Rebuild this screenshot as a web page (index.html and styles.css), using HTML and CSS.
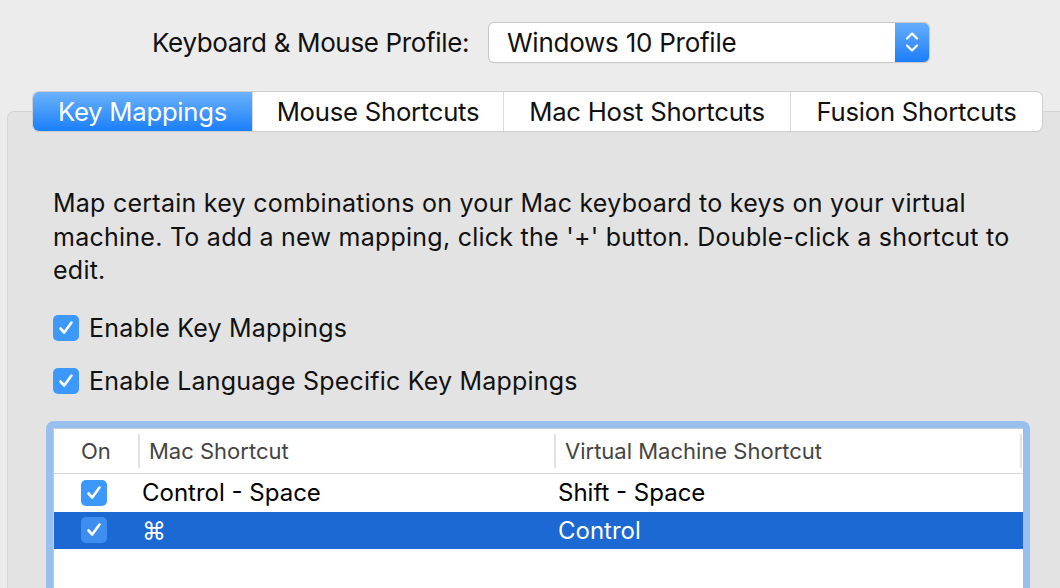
FILE: index.html
```html
<!DOCTYPE html>
<html>
<head>
<meta charset="utf-8">
<link rel="stylesheet" href="styles.css">
</head>
<body>
<div class="window">
  <div class="profile-row">
    <span class="profile-label">Keyboard &amp; Mouse Profile:</span>
    <div class="popup">
      <span class="popup-value">Windows 10 Profile</span>
      <span class="stepper">
        <svg width="16" height="26" viewBox="0 0 16 26"><path d="M3 9.5 L8 4.5 L13 9.5" fill="none" stroke="#fff" stroke-width="2.2" stroke-linecap="round" stroke-linejoin="round"/><path d="M3 16.5 L8 21.5 L13 16.5" fill="none" stroke="#fff" stroke-width="2.2" stroke-linecap="round" stroke-linejoin="round"/></svg>
      </span>
    </div>
  </div>

  <div class="panel">
    <div class="tabs">
      <div class="tab tab-selected tab-key">Key Mappings</div>
      <div class="tab tab-mouse">Mouse Shortcuts</div>
      <div class="tab tab-host">Mac Host Shortcuts</div>
      <div class="tab tab-fusion">Fusion Shortcuts</div>
    </div>

    <p class="desc">Map certain key combinations on your Mac keyboard to keys on your virtual machine. To add a new mapping, click the '+' button. Double-click a shortcut to edit.</p>

    <label class="check-row">
      <span class="checkbox"><svg width="26" height="26" viewBox="0 0 26 26"><path d="M7.5 13.5 L11.2 17.5 L18.5 7.5" fill="none" stroke="#fff" stroke-width="2.6" stroke-linecap="round" stroke-linejoin="round"/></svg></span>
      <span class="check-label">Enable Key Mappings</span>
    </label>
    <label class="check-row">
      <span class="checkbox"><svg width="26" height="26" viewBox="0 0 26 26"><path d="M7.5 13.5 L11.2 17.5 L18.5 7.5" fill="none" stroke="#fff" stroke-width="2.6" stroke-linecap="round" stroke-linejoin="round"/></svg></span>
      <span class="check-label">Enable Language Specific Key Mappings</span>
    </label>

    <div class="table-ring">
      <div class="table">
        <div class="thead">
          <div class="th th-on">On</div>
          <div class="th th-mac">Mac Shortcut</div>
          <div class="th th-vm">Virtual Machine Shortcut</div>
          <div class="th th-end"></div>
        </div>
        <div class="row">
          <div class="cell cell-on"><span class="checkbox small"><svg width="26" height="26" viewBox="0 0 26 26"><path d="M7.5 13.5 L11.2 17.5 L18.5 7.5" fill="none" stroke="#fff" stroke-width="2.6" stroke-linecap="round" stroke-linejoin="round"/></svg></span></div>
          <div class="cell cell-mac">Control - Space</div>
          <div class="cell cell-vm">Shift - Space</div>
        </div>
        <div class="row row-selected">
          <div class="cell cell-on"><span class="checkbox small sel"><svg width="26" height="26" viewBox="0 0 26 26"><path d="M7.5 13.5 L11.2 17.5 L18.5 7.5" fill="none" stroke="#fff" stroke-width="2.6" stroke-linecap="round" stroke-linejoin="round"/></svg></span></div>
          <div class="cell cell-mac">⌘</div>
          <div class="cell cell-vm">Control</div>
        </div>
        <div class="filler"></div>
      </div>
    </div>
  </div>
</div>
</body>
</html>
```

FILE: styles.css
```css
html, body {
  margin: 0;
  padding: 0;
}
body {
  background: #ececec;
  font-family: Inter, "Noto Sans", sans-serif;
  color: #000;
  width: 1060px;
  height: 588px;
  overflow: hidden;
}
.window {
  padding-top: 22px;
}
.profile-row {
  display: flex;
  align-items: center;
  padding-left: 152px;
  height: 40px;
}
.profile-label {
  font-size: 26px;
  letter-spacing: -0.35px;
  color: #111;
  width: 337px;
}
.popup {
  width: 440px;
  height: 39px;
  box-sizing: border-box;
  background: #fff;
  border-radius: 5px;
  box-shadow: 0 0 0 1px #c9c9c9, 0 1px 1px rgba(0,0,0,0.15);
  display: flex;
  align-items: center;
  overflow: hidden;
}
.popup-value {
  flex: 1;
  padding-left: 18px;
  font-size: 26px;
  letter-spacing: -0.25px;
  color: #111;
}
.stepper {
  width: 34px;
  height: 39px;
  background: linear-gradient(#66adfb, #1c7efb);
  display: flex;
  align-items: center;
  justify-content: center;
}
.panel {
  margin-top: 49px;
  margin-left: 7px;
  height: 476px;
  background: #e3e3e3;
  border-top: 1px solid #d3d3d3;
  border-left: 1px solid #d6d6d6;
  border-top-left-radius: 7px;
}
.tabs {
  display: flex;
  margin: -20px 0 0 25px;
  width: 1009px;
  height: 39px;
  background: #fff;
  border-radius: 6px;
  box-shadow: 0 0 0 1px #cfcfcf, 0 1px 1px rgba(0,0,0,0.12);
  overflow: hidden;
  position: relative;
}
.tab {
  display: flex;
  align-items: center;
  justify-content: center;
  font-size: 25.7px;
  letter-spacing: -0.25px;
  color: #111;
  border-left: 1px solid #dadada;
  box-sizing: border-box;
}
.tab-key { width: 219px; border-left: none; }
.tab-mouse { width: 251px; }
.tab-host { width: 287px; }
.tab-fusion { width: 252px; }
.tab-selected {
  background: linear-gradient(#6bb2fb, #1a7ffb);
  color: #fff;
}
.desc {
  margin: 56px 0 0 45px;
  width: 980px;
  font-size: 25px;
  line-height: 33.5px;
  letter-spacing: 0.25px;
  color: #111;
}
.check-row {
  display: flex;
  align-items: center;
  margin-left: 45px;
  height: 26px;
}
.desc + .check-row { margin-top: 27px; }
.check-row + .check-row { margin-top: 27px; }
.checkbox {
  width: 26px;
  height: 26px;
  border-radius: 5px;
  background: #3c99fb;
  display: inline-flex;
  flex: none;
}
.check-label {
  margin-left: 10px;
  font-size: 25px;
  letter-spacing: 0.2px;
  color: #111;
}
.table-ring {
  margin: 27px 0 0 38px;
  width: 984px;
  box-sizing: border-box;
  border: 7px solid #98c0ee;
  border-bottom: none;
  border-radius: 8px 8px 0 0;
  height: 167px;
}
.table {
  background: #fff;
  border-top: 1px solid #c4ccd8;
  border-left: 1px solid #c4ccd8;
  height: 100%;
  box-sizing: border-box;
}
.thead {
  display: flex;
  height: 44px;
  align-items: center;
  border-bottom: 1px solid #d6d6d6;
  font-size: 22px;
  color: #444;
}
.th {
  box-sizing: border-box;
  height: 34px;
  display: flex;
  align-items: center;
}
.th-on { width: 84px; padding-left: 27px; }
.th-mac { width: 416px; padding-left: 9px; border-left: 2px solid #e2e2e2; }
.th-vm { width: 466px; padding-left: 9px; border-left: 2px solid #e2e2e2; }
.th-end { width: 2px; border-left: 2px solid #e2e2e2; }
.row {
  display: flex;
  align-items: center;
  height: 38px;
  font-size: 24px;
  color: #000;
}
.row-selected {
  background: #1c69d3;
  color: #fff;
  height: 37px;
}
.cell-on { width: 88px; padding-left: 27px; box-sizing: border-box; display: flex; }
.cell-mac { width: 416px; }
.cell-vm { flex: 1; }
.checkbox.small { width: 26px; height: 26px; }
.checkbox.sel { background: #3d8ef0; }
```
